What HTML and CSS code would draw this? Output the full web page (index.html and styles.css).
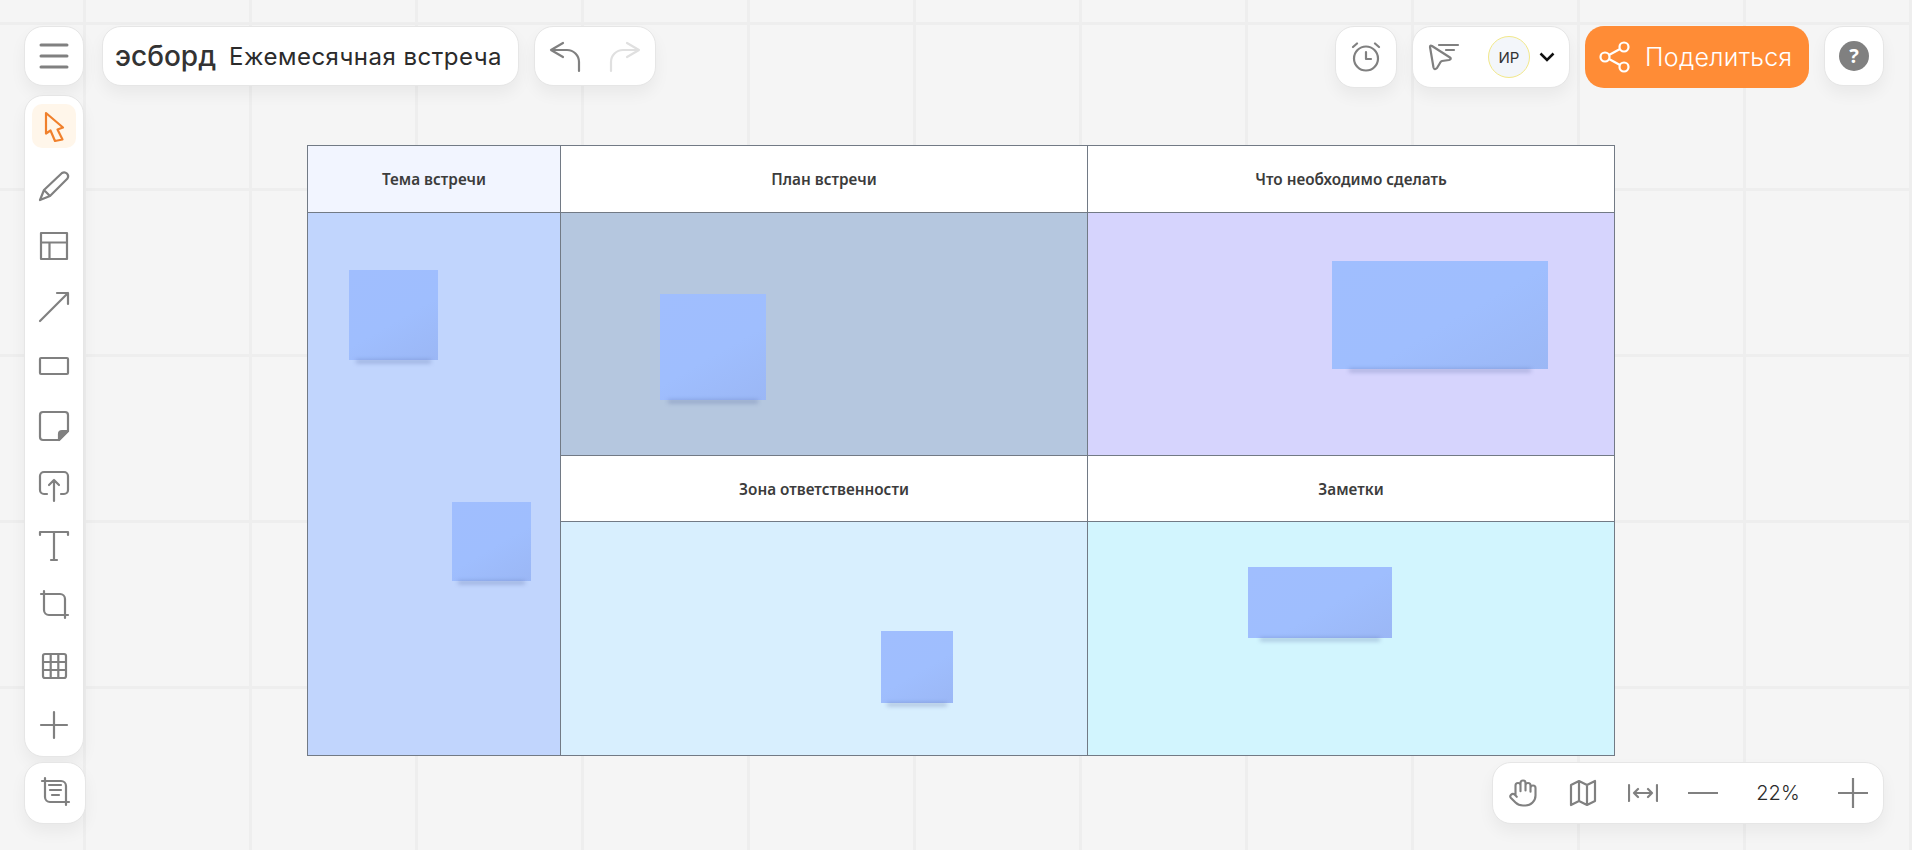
FILE: index.html
```html
<!DOCTYPE html>
<html lang="ru">
<head>
  <meta charset="UTF-8" />
  <title>эсборд - Ежемесячная встреча</title>
  <meta name="viewport" content="width=device-width, initial-scale=1.0" />
  <link rel="stylesheet" href="styles.css">
</head>
<body>

  <!-- Board on the canvas -->
  <main class="canvas">
    <div class="board">
      <div class="cell head head-topic">Тема встречи</div>
      <div class="cell head">План встречи</div>
      <div class="cell head">Что необходимо сделать</div>
      <div class="cell fill-topic"></div>
      <div class="cell fill-plan"></div>
      <div class="cell fill-todo"></div>
      <div class="cell head">Зона ответственности</div>
      <div class="cell head">Заметки</div>
      <div class="cell fill-zone"></div>
      <div class="cell fill-notes"></div>
    </div>
    <div class="note note-1"></div>
    <div class="note note-2"></div>
    <div class="note note-3"></div>
    <div class="note note-4"></div>
    <div class="note note-5"></div>
    <div class="note note-6"></div>
  </main>

  <!-- Top bar -->
  <header class="topbar">
    <div class="topbar-group">
      <button class="card menu-btn">
        <svg class="icon" width="30" height="30" viewBox="0 0 30 30"><path d="M2 4H28M2 15H28M2 26H28" stroke-width="3"/></svg>
      </button>
      <div class="card brand">
        <span class="logo">эсборд</span>
        <span class="title">Ежемесячная встреча</span>
      </div>
      <div class="card history">
        <button class="history-btn">
          <svg class="icon" width="44" height="44" viewBox="0 0 44 44"><path d="M20 9L8 16L20 23M8 16H24a12 12 0 0 1 12 12V37"/></svg>
        </button>
        <button class="history-btn">
          <svg class="icon icon-off" width="44" height="44" viewBox="0 0 44 44"><path d="M24 9L36 16L24 23M36 16H20a12 12 0 0 0-12 12V37"/></svg>
        </button>
      </div>
    </div>
    <div class="topbar-group topbar-right">
      <button class="card timer-btn">
        <svg class="icon" width="30" height="30" viewBox="0 0 30 30"><circle cx="15" cy="16.500" r="12"/><path d="M15 10V17H20M2 5L6 1.500M28 5L24 1.500"/></svg>
      </button>
      <div class="card people">
        <svg class="icon" width="32" height="28" viewBox="0 0 32 28"><path d="M2 4Q2 2 4 3L22 14.500Q24 16 21 17L14 18Q12.500 18.500 12 20L9 25Q6.500 27.500 5.500 24.500ZM11 2H30M18 7H26"/></svg>
        <span class="avatar">ИР</span>
        <svg class="chevron" width="16" height="10" viewBox="0 0 16 10"><path d="M1.500 1.500L8 8L14.500 1.500"/></svg>
      </div>
      <button class="share-btn">
        <svg class="share-icon" width="32" height="32" viewBox="0 0 32 32"><circle cx="25" cy="6" r="4.500"/><circle cx="6" cy="16" r="4.500"/><circle cx="25" cy="26" r="4.500"/><path d="M10 14L21 8M10 18L21 24"/></svg>
        Поделиться
      </button>
      <button class="card help-btn"><span class="help-mark">?</span></button>
    </div>
  </header>

  <!-- Left tools -->
  <nav class="card tools">
    <button class="tool active">
      <svg class="icon icon-active" width="44" height="44" viewBox="0 0 44 44"><path d="M14 9L31 23.500L25.500 25.500L30.500 35.500L23 37L18.500 26.500L14 29.500Z"/></svg>
    </button>
    <button class="tool">
      <svg class="icon" width="44" height="44" viewBox="0 0 44 44"><path d="M8 36L12 26L30 9a4 4 0 0 1 5.500 5.500L18 32ZM12 26L18 32"/></svg>
    </button>
    <button class="tool">
      <svg class="icon" width="44" height="44" viewBox="0 0 44 44"><path d="M9 9H35V35H9ZM9 18.500H35M17.500 18.500V35"/></svg>
    </button>
    <button class="tool">
      <svg class="icon" width="44" height="44" viewBox="0 0 44 44"><path d="M8 37L36 9M25 9H36V20"/></svg>
    </button>
    <button class="tool">
      <svg class="icon" width="44" height="44" viewBox="0 0 44 44"><rect x="8" y="14" width="28" height="16" rx="1"/></svg>
    </button>
    <button class="tool">
      <svg class="icon" width="44" height="44" viewBox="0 0 44 44"><path d="M11 8H33a3 3 0 0 1 3 3V27L27 36H11a3 3 0 0 1-3-3V11a3 3 0 0 1 3-3Z"/><path class="icon-fill" d="M36 27L27 36V30a3 3 0 0 1 3-3Z"/></svg>
    </button>
    <button class="tool">
      <svg class="icon" width="44" height="44" viewBox="0 0 44 44"><path d="M15 30H12a4 4 0 0 1-4-4V12a4 4 0 0 1 4-4H32a4 4 0 0 1 4 4V26a4 4 0 0 1-4 4H29M22 37V16M17 21L22 16L27 21"/></svg>
    </button>
    <button class="tool">
      <svg class="icon" width="44" height="44" viewBox="0 0 44 44"><path d="M8 11V8H36V11M22 8V36M19 36H25"/></svg>
    </button>
    <button class="tool">
      <svg class="icon" width="44" height="44" viewBox="0 0 44 44"><path d="M9 10H28a5 5 0 0 1 5 5V34M12 7V26a5 5 0 0 0 5 5H36"/></svg>
    </button>
    <button class="tool">
      <svg class="icon" width="44" height="44" viewBox="0 0 44 44"><rect x="11" y="10" width="23" height="24" rx="2"/><path d="M11 18H34M11 26H34M18.700 10V34M26.300 10V34"/></svg>
    </button>
    <button class="tool">
      <svg class="icon" width="44" height="44" viewBox="0 0 44 44"><path d="M9 21H35M22 8V34"/></svg>
    </button>
  </nav>

  <button class="card notes-btn">
    <svg class="icon" width="44" height="44" viewBox="0 0 44 44"><path d="M9 10H28a5 5 0 0 1 5 5V34M12 7V26a5 5 0 0 0 5 5H36M16 14H28M17 19H28M19 24H26"/></svg>
  </button>

  <!-- Zoom controls -->
  <div class="card zoombar">
    <button class="zoom-btn">
      <svg class="icon" width="30" height="30" viewBox="0 0 24 24"><path d="M18 11V6a2 2 0 0 0-4 0M14 10V4a2 2 0 0 0-4 0v2M10 10.500V6a2 2 0 0 0-4 0v8M18 8a2 2 0 1 1 4 0v6a8 8 0 0 1-8 8h-2c-2.800 0-4.500-.86-6-2.340l-3.600-3.600a2 2 0 0 1 2.830-2.820L7 15" stroke-width="1.700"/></svg>
    </button>
    <button class="zoom-btn">
      <svg class="icon" width="30" height="30" viewBox="0 0 30 30"><path d="M3 7L11 3L19 7L27 3V23L19 27L11 23L3 27ZM11 3V23M19 7V27"/></svg>
    </button>
    <button class="zoom-btn">
      <svg class="icon" width="30" height="30" viewBox="0 0 30 30"><path d="M1 7V23M29 7V23M6 15H24M10 11L6 15L10 19M20 11L24 15L20 19"/></svg>
    </button>
    <button class="zoom-btn">
      <svg class="icon" width="30" height="30" viewBox="0 0 30 30"><path d="M0 15H30"/></svg>
    </button>
    <span class="zoom-value">22%</span>
    <button class="zoom-btn">
      <svg class="icon" width="30" height="30" viewBox="0 0 30 30"><path d="M0 15H30M15 0V30"/></svg>
    </button>
  </div>

</body>
</html>
```

FILE: styles.css
```css
body {
  margin: 0;
  height: 850px;
  overflow: hidden;
  font-family: "Noto Sans", Arial, sans-serif;
  color: #333;
  background: #f5f5f5;
}
button {
  border: none;
  background: none;
  padding: 0;
  font-family: inherit;
  cursor: pointer;
}

/* Canvas grid */
.canvas {
  position: absolute;
  inset: 0;
  background-image:
    repeating-linear-gradient(to bottom, #eeeeee 0, #eeeeee 3px, transparent 3px, transparent 166px),
    repeating-linear-gradient(to right, #eeeeee 0, #eeeeee 3px, transparent 3px, transparent 166px);
  background-size: 100% 166px, 166px 100%;
  background-position: 0 22px, 83px 0;
}

/* Board */
.board {
  position: absolute;
  left: 307px;
  top: 145px;
  display: grid;
  grid-template-columns: 252px 526px 526px;
  grid-template-rows: 66px 242px 65px 233px;
  gap: 1px;
  padding: 1px;
  background: #727a85;
}
.cell {
  display: flex;
  align-items: center;
  justify-content: center;
}
.head {
  background: #fff;
  font-size: 15.300px;
  font-weight: 600;
  color: #3c3c3c;
}
.head-topic {
  background: #f2f5ff;
}
.fill-topic {
  grid-row: 2 / 5;
  background: #c1d5fd;
}
.fill-plan {
  background: #b5c7df;
}
.fill-todo {
  background: #d6d4fd;
}
.fill-zone {
  background: #d8effe;
}
.fill-notes {
  background: #d2f5fe;
}

/* Sticky notes */
.note {
  position: absolute;
  background: linear-gradient(150deg, #a0befe 0%, #9fbefe 55%, #9bb7f5 100%);
}
.note::after {
  content: "";
  position: absolute;
  left: 8%;
  right: 8%;
  bottom: -3px;
  height: 3px;
  background: rgba(70, 90, 150, 0.38);
  filter: blur(2px);
}
.note-1 {
  left: 349px;
  top: 270px;
  width: 89px;
  height: 90px;
}
.note-2 {
  left: 660px;
  top: 294px;
  width: 106px;
  height: 106px;
}
.note-3 {
  left: 1332px;
  top: 261px;
  width: 216px;
  height: 108px;
}
.note-4 {
  left: 452px;
  top: 502px;
  width: 79px;
  height: 79px;
}
.note-5 {
  left: 881px;
  top: 631px;
  width: 72px;
  height: 72px;
}
.note-6 {
  left: 1248px;
  top: 567px;
  width: 144px;
  height: 71px;
}

/* Panels */
.card {
  background: #fff;
  border: 1px solid #e6e6e6;
  border-radius: 19px;
  box-sizing: border-box;
  box-shadow: 0 8px 16px rgba(0, 0, 0, 0.05);
}
.icon {
  display: block;
  fill: none;
  stroke: #808080;
  stroke-width: 2.200;
  stroke-linecap: round;
  stroke-linejoin: round;
}
.icon-off {
  stroke: #e0e0e0;
}
.icon-active {
  stroke: #f0802c;
}
.icon-fill {
  fill: #808080;
}

/* Top bar */
.topbar {
  position: absolute;
  left: 24px;
  right: 28px;
  top: 26px;
  display: flex;
  justify-content: space-between;
  align-items: flex-start;
}
.topbar-group {
  display: flex;
  align-items: flex-start;
  gap: 18px;
}
.topbar-group .history {
  margin-left: -3px;
}
.topbar-right {
  gap: 15px;
}
.menu-btn {
  width: 60px;
  height: 60px;
  display: flex;
  align-items: center;
  justify-content: center;
}
.brand {
  height: 60px;
  width: 417px;
  padding-left: 12px;
  display: flex;
  align-items: center;
  gap: 13px;
}
.logo {
  font-family: "Inter", sans-serif;
  font-size: 28px;
  font-weight: 500;
  color: #333;
}
.title {
  font-family: "Inter", sans-serif;
  font-size: 24px;
  letter-spacing: 0.5px;
  color: #2b2b2b;
  white-space: nowrap;
}
.history {
  width: 122px;
  height: 60px;
  display: flex;
}
.history-btn {
  width: 60px;
  display: flex;
  align-items: center;
  justify-content: center;
}
.timer-btn {
  width: 62px;
  height: 62px;
  display: flex;
  align-items: center;
  justify-content: center;
}
.people {
  width: 158px;
  height: 62px;
  padding-left: 15px;
  display: flex;
  align-items: center;
}
.avatar {
  width: 42px;
  height: 42px;
  margin-left: 28px;
  border: 1px solid #f2e88a;
  border-radius: 50%;
  box-sizing: border-box;
  background: #f3f6fa;
  display: flex;
  align-items: center;
  justify-content: center;
  font-family: "Inter", sans-serif;
  font-size: 15px;
  color: #333;
}
.chevron {
  margin-left: 9px;
  fill: none;
  stroke: #111;
  stroke-width: 2.500;
}
.share-btn {
  width: 224px;
  height: 62px;
  padding-left: 14px;
  box-sizing: border-box;
  border-radius: 19px;
  background: #ff8c36;
  color: #fff;
  font-family: "Inter", sans-serif;
  font-size: 25px;
  font-weight: 300;
  letter-spacing: 0.3px;
  display: flex;
  align-items: center;
  gap: 14px;
}
.share-icon {
  fill: none;
  stroke: #fff;
  stroke-width: 2.200;
}
.help-btn {
  width: 60px;
  height: 60px;
  display: flex;
  align-items: center;
  justify-content: center;
}
.help-mark {
  width: 30px;
  height: 30px;
  border-radius: 50%;
  background: #808080;
  color: #fff;
  font-size: 20px;
  font-weight: 700;
  line-height: 30px;
  text-align: center;
}

/* Left tools */
.tools {
  position: absolute;
  left: 24px;
  top: 95px;
  width: 60px;
  height: 662px;
  padding: 8px 7px;
  display: flex;
  flex-direction: column;
  gap: 16px;
}
.tool {
  width: 44px;
  height: 44px;
  border-radius: 10px;
}
.tool.active {
  background: #fff6ea;
}
.notes-btn {
  position: absolute;
  left: 24px;
  top: 762px;
  width: 62px;
  height: 62px;
  display: flex;
  align-items: center;
  justify-content: center;
}

/* Zoom controls */
.zoombar {
  position: absolute;
  left: 1492px;
  top: 762px;
  width: 392px;
  height: 62px;
  display: flex;
  align-items: center;
}
.zoom-btn {
  width: 60px;
  display: flex;
  justify-content: center;
}
.zoom-value {
  width: 90px;
  text-align: center;
  font-family: "Inter", sans-serif;
  font-size: 20px;
  font-weight: 300;
  color: #2b2b2b;
}
```
